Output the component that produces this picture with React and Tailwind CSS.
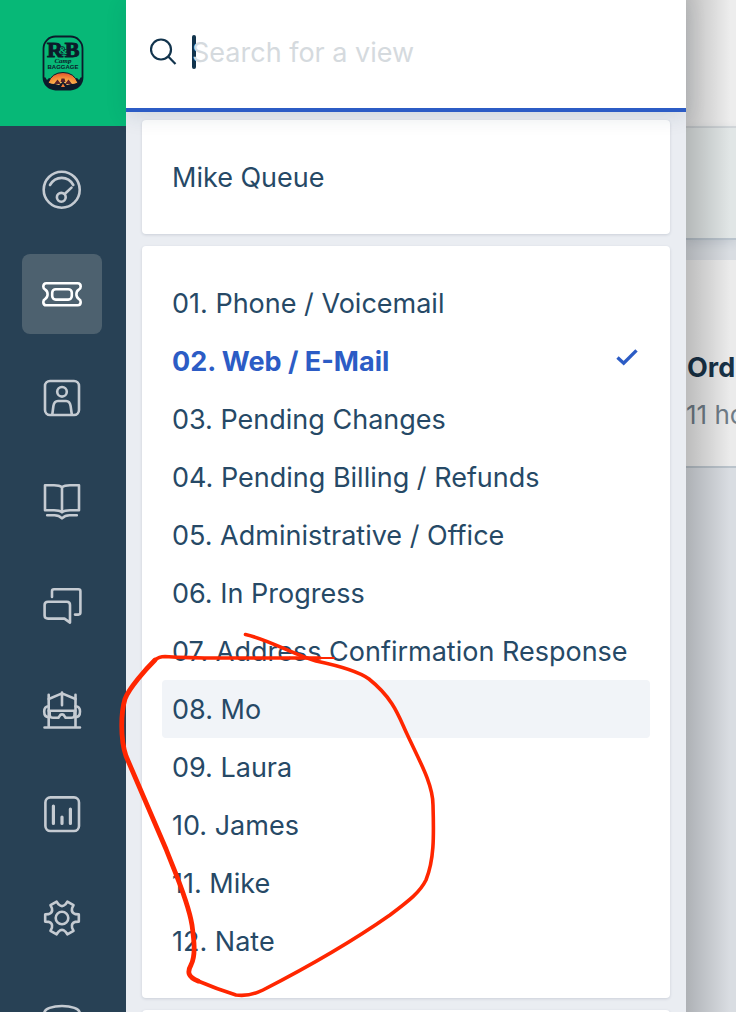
import { useState } from 'react';

const views = [
  '01. Phone / Voicemail',
  '02. Web / E-Mail',
  '03. Pending Changes',
  '04. Pending Billing / Refunds',
  '05. Administrative / Office',
  '06. In Progress',
  '07. Address Confirmation Response',
  '08. Mo',
  '09. Laura',
  '10. James',
  '11. Mike',
  '12. Nate',
];

// six-tooth cog outline, one tooth every 60 degrees
const gearPath = () => {
  const at = (deg, r) => {
    const a = (deg * Math.PI) / 180;
    return `${(20 + r * Math.cos(a)).toFixed(2)} ${(20 + r * Math.sin(a)).toFixed(2)}`;
  };
  let d = '';
  for (let t = 0; t < 360; t += 60) {
    d += `${t === 0 ? 'M' : 'L'}${at(t - 12, 17.2)}L${at(t + 12, 17.2)}L${at(t + 16, 14)}Q${at(t + 30, 10.4)} ${at(t + 44, 14)}`;
  }
  return d + 'Z';
};

const navItems = [
  {
    id: 'dashboard',
    icon: (
      <>
        <circle cx="19.7" cy="19.7" r="18" />
        <path d="M8 15C13.5 5.5 26 5.5 31.3 15" />
        <circle cx="19.3" cy="27.3" r="4.4" />
        <path d="M22.7 24L29.5 17.6" />
      </>
    ),
  },
  {
    id: 'tickets',
    icon: (
      <>
        <path d="M4.3 9.3H35.7Q38.7 9.3 38.7 12.5Q38.7 14.6 36.8 15.7Q34.4 17.2 34.4 20.3Q34.4 23.4 36.8 24.9Q38.7 26 38.7 28.1Q38.7 31.3 35.7 31.3H4.3Q1.3 31.3 1.3 28.1Q1.3 26 3.2 24.9Q5.6 23.4 5.6 20.3Q5.6 17.2 3.2 15.7Q1.3 14.6 1.3 12.5Q1.3 9.3 4.3 9.3Z" />
        <rect x="10.2" y="15.2" width="19.6" height="10.4" rx="3.5" />
      </>
    ),
  },
  {
    id: 'contacts',
    icon: (
      <>
        <rect x="3" y="3" width="34" height="34" rx="5" />
        <circle cx="20" cy="13.8" r="4.8" />
        <path d="M10.3 36.5L11.4 28Q12.2 23 16 23H24Q27.8 23 28.6 28L29.8 36.5" />
      </>
    ),
  },
  {
    id: 'solutions',
    icon: (
      <>
        <path d="M20 5.2Q17.5 3.2 12 3.2H3V28.3H12Q17.5 28.3 20 30.3Q22.5 28.3 28 28.3H37V3.2H28Q22.5 3.2 20 5.2V30" />
        <path d="M5.2 33.3H12.5Q17 33.3 20 36.3Q23 33.3 27.5 33.3H34.8" />
      </>
    ),
  },
  {
    id: 'forums',
    icon: (
      <>
        <path d="M10 11V5.2Q10 3.2 12 3.2H36.4Q38.4 3.2 38.4 5.2V26.6Q38.4 28.6 36.4 28.6H33" />
        <path d="M6 15.8H24.8Q28 15.8 28 19V36.6L22.5 32.6H6Q2.6 32.6 2.6 29.4V19Q2.6 15.8 6 15.8Z" />
      </>
    ),
  },
  {
    id: 'bots',
    icon: (
      <>
        <path d="M6.7 4.8V37.3M33.5 4.8V37.3M2.5 37.5H38" />
        <path d="M6.7 9L20 3.4L33.5 9M20 2.5V15.2" />
        <path d="M6.7 20.8H33.5M7.7 20.8V25Q7.7 27.8 11 27.8H15.2Q17 27.8 17.6 26Q18.300 24.4 20 24.4Q21.700 24.4 22.4 26Q23 27.8 24.8 27.8H29.2Q32.5 27.8 32.5 25V20.8" />
        <path d="M6.7 16.2Q2.2 16.2 2.2 21.6Q2.2 27.2 6.7 27.2M33.5 16.2Q38 16.2 38 21.6Q38 27.2 33.5 27.2" />
      </>
    ),
  },
  {
    id: 'analytics',
    icon: (
      <>
        <rect x="3.4" y="3.4" width="33.6" height="33.6" rx="5" />
        <path d="M11.4 12V29.5M20 23V29.5M28.4 15V29.5" strokeWidth="3.2" />
      </>
    ),
  },
  {
    id: 'admin',
    icon: (
      <>
        <path d={gearPath()} />
        <circle cx="20" cy="20" r="6.3" />
      </>
    ),
  },
  {
    id: 'marketplace',
    icon: (
      <>
        <ellipse cx="20" cy="10.5" rx="17.5" ry="6.5" />
        <path d="M2.5 10.5V30Q8 36.5 20 36.5Q32 36.5 37.5 30V10.5" />
      </>
    ),
  },
];

const Logo = () => (
  <svg width="42" height="56" viewBox="0 0 42 56" aria-hidden="true">
    <defs>
      <radialGradient id="sunset" cx="0.5" cy="1" r="1">
        <stop offset="0" stopColor="#ffe08a" />
        <stop offset="0.5" stopColor="#f9a03f" />
        <stop offset="1" stopColor="#e2502c" />
      </radialGradient>
      <clipPath id="badge">
        <rect x="2" y="2" width="38" height="52" rx="11" />
      </clipPath>
    </defs>
    <g clipPath="url(#badge)">
      <path d="M0 44L3 42L5 45L7 43L10 44H32L35 43L37 45L39 42L42 44V56H0Z" fill="#0c1a2b" />
      <path d="M6 48Q10 37.500 21 37.500Q32 37.500 36 48Q30 51.500 21 51.500Q12 51.500 6 48Z" fill="url(#sunset)" stroke="#0c1a2b" />
      <path d="M12 49L15.500 44.500L19 49ZM23 49L26.500 44.500L30 49ZM18.500 47L19.500 43.500H22.500L23.500 47Z" fill="#5b2229" />
      <path d="M2 49Q12 48 17 50L21 46.500L25 50Q30 48 40 49V56H2Z" fill="#0c1a2b" />
      <path d="M21 48.500L19 52H23Z" fill="#f47b35" />
    </g>
    <rect x="1.5" y="1.5" width="39" height="53" rx="12" fill="none" stroke="#0c1a2b" strokeWidth="1.8" />
    <text x="13" y="22" textAnchor="middle" fontFamily="Liberation Serif" fontWeight="bold" fontSize="22" fill="#0c1a2b" stroke="#0c1a2b" strokeWidth="1">R</text>
    <text x="30" y="22" textAnchor="middle" fontFamily="Liberation Serif" fontWeight="bold" fontSize="22" fill="#0c1a2b" stroke="#0c1a2b" strokeWidth="1">B</text>
    <text x="21" y="19" textAnchor="middle" fontFamily="Liberation Serif" fontWeight="bold" fontSize="11" fill="#07b877" stroke="#0c1a2b" strokeWidth="1.5" paintOrder="stroke">&amp;</text>
    <text x="21" y="28" textAnchor="middle" fontFamily="Liberation Serif" fontStyle="italic" fontWeight="bold" fontSize="7" fill="#0c1a2b">Camp</text>
    <text x="21" y="34" textAnchor="middle" fontFamily="Liberation Sans" fontWeight="bold" fontSize="6" fill="#0c1a2b">BAGGAGE</text>
  </svg>
);

const Sidebar = () => (
  <aside className="w-[126px] shrink-0 bg-[#284155]">
    <a href="#home" aria-label="Home" className="flex h-[126px] items-center justify-center bg-[#07b877]">
      <Logo />
    </a>
    <nav className="flex flex-col gap-6 py-6 pl-[22px]">
      {navItems.map(({ id, icon }) => (
        <a
          key={id}
          href={`#${id}`}
          aria-label={id}
          className={`flex size-20 items-center justify-center rounded-lg ${id === 'tickets' ? 'bg-[#4d616f] text-white' : 'text-[#c5cbd2]'}`}
        >
          <svg
            width="40"
            height="40"
            viewBox="0 0 40 40"
            fill="none"
            stroke="currentColor"
            strokeWidth="2.6"
            strokeLinecap="round"
            strokeLinejoin="round"
          >
            {icon}
          </svg>
        </a>
      ))}
    </nav>
  </aside>
);

const SearchBar = ({ value, onChange }) => (
  <div className="relative z-10 flex h-28 shrink-0 items-center border-b-4 border-[#2c5cc5] bg-white pb-1 pl-6 shadow-[0_4px_20px_rgba(24,50,71,0.12)]">
    <svg width="28" height="28" viewBox="0 0 28 28" fill="none" stroke="#12344d" strokeWidth="2.2">
      <circle cx="11" cy="11.5" r="10" />
      <path d="M18.2 18.6L25.5 26" />
    </svg>
    <div className="relative ml-3.5 flex-1">
      <span className="absolute inset-y-0 left-0 my-auto h-[34px] w-1 rounded-xs bg-[#12344d]" />
      <input
        type="text"
        aria-label="Search for a view"
        placeholder="Search for a view"
        value={value}
        onChange={onChange}
        className="relative w-full bg-transparent pt-0.5 text-[27px] text-[#12344d] outline-none placeholder:text-[#d5dade]"
      />
    </div>
  </div>
);

const Card = ({ children }) => (
  <ul className="rounded bg-white px-5 py-7 shadow-[0_1px_3px_rgba(24,50,71,0.15)]">{children}</ul>
);

const ViewItem = ({ name, selected, hovered, onSelect }) => (
  <li>
    <button
      type="button"
      onClick={onSelect}
      className={`flex h-[58px] w-full items-center justify-between rounded px-2.5 pt-0.5 text-left whitespace-nowrap ${selected ? 'font-bold text-[#2c5cc5]' : 'text-[#264966]'} ${hovered ? 'bg-[#f1f4f8]' : ''}`}
    >
      {name}
      {selected && (
        <svg width="24" height="20" viewBox="0 0 24 20" fill="none" stroke="currentColor" strokeWidth="3.4" className="mb-2">
          <path d="M1.500 9.500L7.700 15.200L20.500 2.400" />
        </svg>
      )}
    </button>
  </li>
);

const TicketPane = () => (
  <main className="relative min-w-12 flex-1 overflow-hidden bg-[#d9dde2] whitespace-nowrap">
    <div className="h-32 border-b-2 border-[#d5d9dc] bg-[#ededed]" />
    <div className="h-28 border-b-2 border-[#b9c3cc] bg-[#e1e6e6] shadow-[0_2px_10px_rgba(24,50,71,0.12)]" />
    <div className="mt-5 h-52 border-b-2 border-[#bac3cb] bg-[#ebebeb] pt-[87px]">
      <h2 className="pl-px leading-[42px] font-bold text-[#183247]">Ord</h2>
      <p className="text-[26px] leading-[52px] text-[#6f7c87]">11 ho</p>
    </div>
    <div className="absolute inset-y-0 left-0 w-11 bg-linear-to-r from-black/20 to-transparent" />
  </main>
);

// red pen loop drawn around the agent views
const PenMark = () => (
  <svg
    width="340"
    height="392"
    viewBox="110 620 340 392"
    fill="none"
    stroke="#ff2600"
    strokeLinecap="round"
    strokeLinejoin="round"
    className="pointer-events-none absolute top-[620px] left-[110px] z-20"
  >
    <path
      strokeWidth="3.6"
      d="M245.5 634.5C270 640 294 655 316 661C340 666 358 671 369 679C394 699 399 717 407 734C419 760 433 784 433 805C434 838 434 860 426 880C420 892 410 900 390 915C350 943 300 971 263 990C251 996 243 996 236 995C220 990 205 984 198 981"
    />
    <path
      strokeWidth="4.8"
      d="M198 981C188 977 187 972 191 965C196 955 194 940 192 925C188 900 174 870 166 849L126 756C120 738 121 712 125 699C129 688 146 669 155 660"
    />
    <path strokeWidth="3.4" d="M155 660Q159 656.5 165 656.5C180 657.5 200 658 220 658H320" />
    <path strokeWidth="1.8" d="M316 658H334" />
  </svg>
);

const App = () => {
  const [query, setQuery] = useState('');
  const [active, setActive] = useState('02. Web / E-Mail');

  const shown = views.filter((name) => name.toLowerCase().includes(query.toLowerCase()));

  return (
    <div className="relative flex h-screen overflow-hidden font-['Inter',sans-serif] text-[27px]">
      <Sidebar />
      <section className="flex w-full max-w-[560px] flex-col bg-[#eaedf2]">
        <SearchBar value={query} onChange={(e) => setQuery(e.target.value)} />
        <div className="flex flex-col gap-3 px-4 pt-2">
          <Card>
            <ViewItem name="Mike Queue" selected={active === 'Mike Queue'} onSelect={() => setActive('Mike Queue')} />
          </Card>
          <Card>
            {shown.map((name) => (
              <ViewItem
                key={name}
                name={name}
                selected={active === name}
                hovered={name === '08. Mo'}
                onSelect={() => setActive(name)}
              />
            ))}
          </Card>
          <Card />
        </div>
      </section>
      <TicketPane />
      <PenMark />
    </div>
  );
};

export default App;
